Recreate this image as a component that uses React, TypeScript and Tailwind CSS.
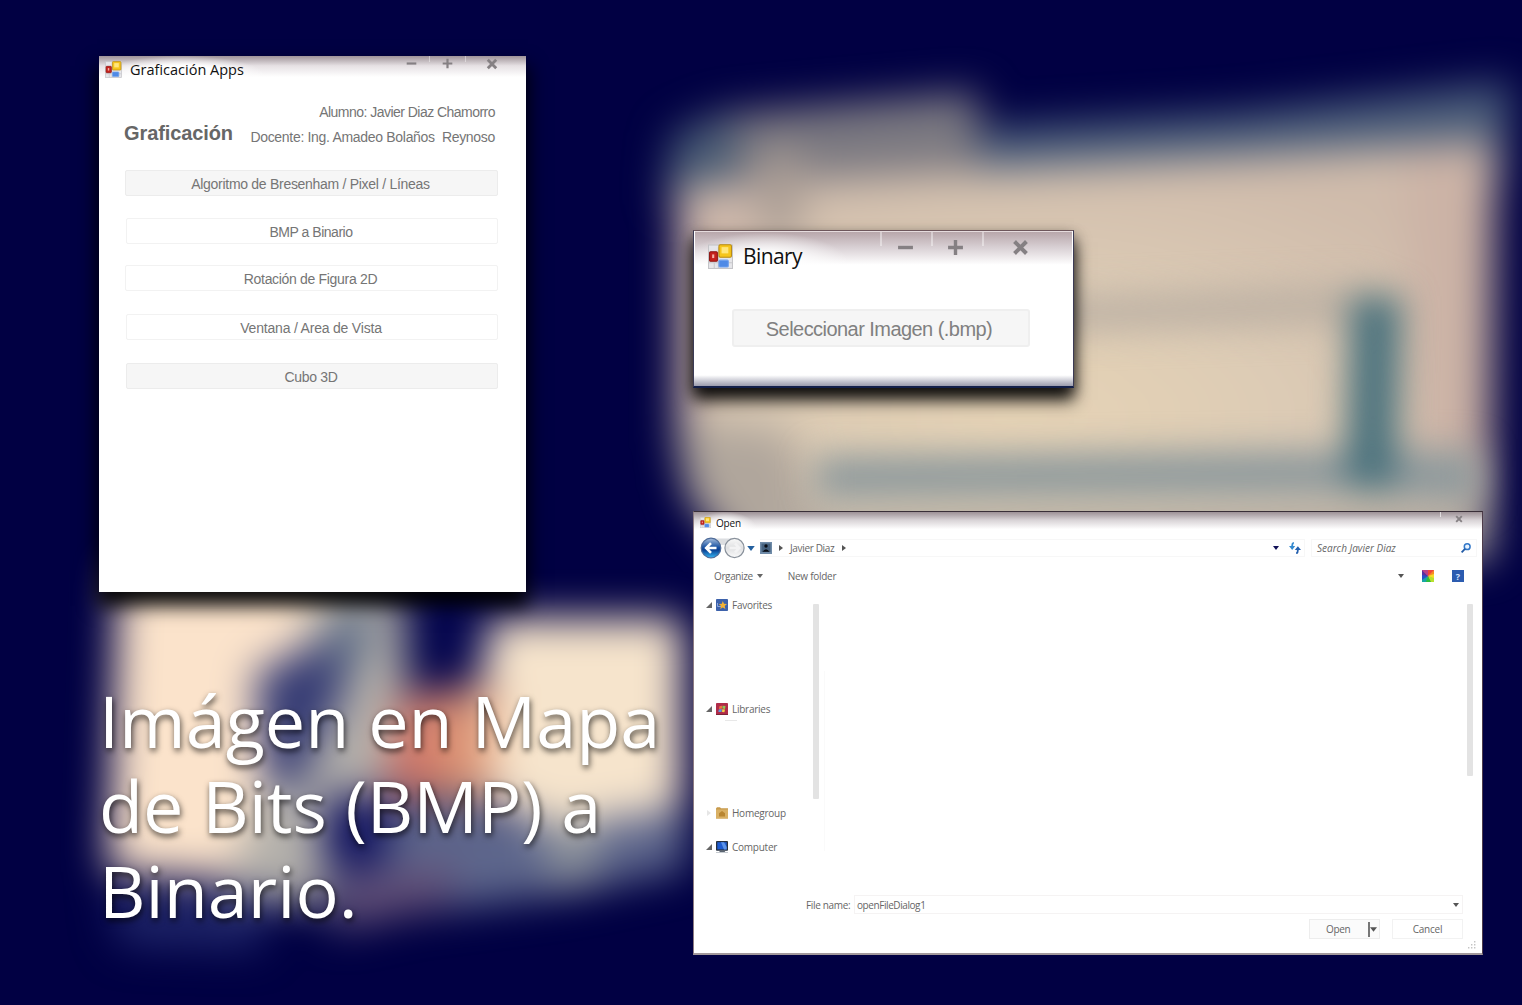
import React from "react";

const ui = "font-['Open_Sans','Noto_Sans',sans-serif]";
const form = "font-['Liberation_Sans',sans-serif]";

function Backdrop() {
  return (
    <svg className="absolute inset-0" width="1522" height="1005" viewBox="0 0 1522 1005" aria-hidden="true">
      <defs>
        <filter id="soft" x="-20%" y="-20%" width="140%" height="140%" colorInterpolationFilters="sRGB"><feGaussianBlur stdDeviation="20" /></filter>
        <filter id="mid" x="-50%" y="-50%" width="200%" height="200%" colorInterpolationFilters="sRGB"><feGaussianBlur stdDeviation="17" /></filter>
        <radialGradient id="sand" cx="0.42" cy="0.66" r="0.65">
          <stop offset="0" stopColor="#e7d4b6" />
          <stop offset="0.5" stopColor="#dccbb5" />
          <stop offset="1" stopColor="#cfbbab" />
        </radialGradient>
        <linearGradient id="red" x1="0" x2="1">
          <stop offset="0" stopColor="#c5605f" />
          <stop offset="0.5" stopColor="#d78a70" />
          <stop offset="1" stopColor="#e2a884" />
        </linearGradient>
      </defs>
      <rect width="1522" height="1005" fill="#010043" />
      <g filter="url(#soft)">
        <path d="M672 134 L720 114 L978 92 L980 195 L668 205Z" fill="#7b7981" />
        <path d="M672 134 L735 114 L735 200 L665 200Z" fill="#475a74" />
        <path d="M980 128 L1240 112 L1512 82 L1500 190 L980 200Z" fill="#4a5d7a" />
        <path d="M677 186 L800 180 L1240 156 L1495 140 L1490 500 L1487 560 L740 560 L690 500 L677 440Z" fill="url(#sand)" />
        <path d="M677 188 L750 182 L750 330 L677 450Z" fill="#cdb7aa" />
        <path d="M760 150 L800 150 L800 240 L760 240Z" fill="#a99c94" />
        <path d="M1405 150 L1490 144 L1490 470 L1420 470Z" fill="#ccb3a6" />
        <path d="M680 420 L790 430 L830 560 L740 560 L684 485Z" fill="#b0a69c" />
        <path d="M740 518 L1490 510 L1490 560 L740 560Z" fill="#b2a99f" />
      </g>
      <g filter="url(#mid)">
        <path d="M1040 298 L1370 284 L1370 322 L1040 332Z" fill="#bdb1a4" />
        <path d="M815 456 L1350 450 L1480 450 L1480 505 L1350 496 L815 500Z" fill="#8e999c" />
        <path d="M1351 296 L1402 296 L1396 488 L1345 488Z" fill="#4b727d" />
      </g>
      <g filter="url(#soft)">
        <path d="M118 570 L350 570 L320 850 L240 880 L108 872Z" fill="#fbe3cb" />
        <path d="M322 570 L402 585 L412 790 L335 870 L320 905 L225 895 L262 780Z" fill="#b3b0ab" />
        <path d="M322 645 L360 590 L372 640 L330 710Z" fill="#5a6a86" />
        <path d="M255 672 L325 640 L345 690 L290 800 L262 770Z" fill="#353b74" />
        <path d="M408 560 L492 560 L482 695 L410 695Z" fill="#04054e" />
        <path d="M490 618 L682 618 L682 808 L560 830 L465 790Z" fill="#f6e4cc" />
        <path d="M395 698 L500 684 L490 800 L385 795Z" fill="url(#red)" />
        <path d="M345 812 L460 802 L560 826 L685 808 L685 870 L560 895 L400 915 L330 930Z" fill="#5d668c" />
        <path d="M325 795 L395 795 L380 872 L322 866Z" fill="#0f115f" />
        <path d="M335 880 L455 862 L450 905 L340 930Z" fill="#614e76" />
        <path d="M545 828 L600 818 L598 885 L548 885Z" fill="#8a909a" />
        <path d="M108 892 L270 895 L260 950 L120 945Z" fill="#1e2468" />
      </g>
    </svg>
  );
}

function FormIcon({ className }: { className: string }) {
  return (
    <svg className={className} viewBox="0 0 24 24" aria-hidden="true">
      <rect x="0.5" y="1" width="23" height="22.5" fill="#e6e6ea" stroke="#c4c4c8" />
      <path d="M1 18h22M6 18v5M10 3v20" stroke="#c8c8cc" />
      <rect x="1.5" y="7.5" width="7.5" height="9" rx="1" fill="#c5211c" stroke="#8d1512" />
      <rect x="4" y="10" width="2" height="3.5" fill="#f5b3a8" />
      <rect x="10.5" y="0.8" width="12" height="12" rx="1.2" fill="#f6c51c" stroke="#b98a10" />
      <rect x="13" y="3" width="6.5" height="6" fill="#ffe67c" />
      <rect x="10.5" y="15.5" width="9" height="6.5" rx="1" fill="#4f8ae6" stroke="#6fa0ee" />
    </svg>
  );
}

function Minus({ className }: { className: string }) {
  return <svg className={className} viewBox="0 0 16 16"><path d="M1 8H15" stroke="#858083" strokeWidth="3.2" /></svg>;
}
function Plus({ className }: { className: string }) {
  return <svg className={className} viewBox="0 0 16 16"><path d="M1 8H15M8 1V15" stroke="#858083" strokeWidth="3.2" /></svg>;
}
function Cross({ className }: { className: string }) {
  return <svg className={className} viewBox="0 0 16 16"><path d="M2.4 2.4L13.6 13.6M13.6 2.4L2.4 13.6" stroke="#858083" strokeWidth="3.8" /></svg>;
}
function Down({ className }: { className: string }) {
  return <svg className={className} viewBox="0 0 6 4"><path d="M0 0H6L3 4Z" fill="currentColor" /></svg>;
}
function Right({ className }: { className: string }) {
  return <svg className={className} viewBox="0 0 4 6"><path d="M0 0L4 3L0 6Z" fill="currentColor" /></svg>;
}
function Expanded() {
  return <svg className="h-[6px] w-[6px] shrink-0" viewBox="0 0 6 6"><path d="M6 0V6H0Z" fill="#666" /></svg>;
}

function MenuButton({ label, className }: { label: string; className: string }) {
  return (
    <button className={`flex h-[26px] shrink-0 items-center justify-center rounded-[2px] border pr-[2px] pt-px text-[14px] leading-none text-[#757575] ${form} ${className}`}>
      <span className="whitespace-nowrap">{label}</span>
    </button>
  );
}

function MainWindow() {
  return (
    <section className="absolute left-[99px] top-[56px] flex h-[536px] w-[427px] flex-col bg-white shadow-[0_12px_18px_2px_rgba(0,0,0,0.95)]">
      <header className="flex h-[28px] shrink-0 items-start bg-linear-to-b from-[#9f9499] via-[#e6e1e4] via-35% to-white to-75%">
        <div className="flex h-[28px] w-[165px] items-center bg-[radial-gradient(ellipse_at_50%_70%,white_35%,transparent_72%)] pl-[6px]">
          <FormIcon className="-mt-[2px] h-[17px] w-[17px] shrink-0" />
          <h2 className={`ml-[8px] whitespace-nowrap text-[14.5px] text-[#111] ${ui}`}>Graficación Apps</h2>
        </div>
        <div className="ml-auto flex h-[15px] items-center pr-[2px]">
          <span className="flex h-full w-[35px] items-start justify-center"><Minus className="mt-[2px] h-[11px] w-[11px]" /></span>
          <span className="flex h-[6px] w-[36px] items-start justify-center self-start border-l border-white/40"><Plus className="mt-[2px] h-[11px] w-[11px] shrink-0" /></span>
          <span className="flex h-[6px] w-[59px] items-start self-start border-l border-white/40 pl-[20px]"><Cross className="mt-[2px] h-[12px] w-[12px] shrink-0" /></span>
        </div>
      </header>
      <div className="mt-[16px] flex justify-between pl-[25px] pr-[31px]">
        <h1 className={`mt-[20px] text-[20px] font-bold leading-[26px] tracking-[-0.1px] text-[#666] ${form}`}>Graficación</h1>
        <div className={`flex flex-col text-right text-[14px] leading-[25px] text-[#757575] ${form}`}>
          <p className="tracking-[-0.53px]">Alumno: Javier Diaz Chamorro</p>
          <p className="whitespace-pre tracking-[-0.31px]">Docente: Ing. Amadeo Bolaños  Reynoso</p>
        </div>
      </div>
      <nav className="mt-[20px] flex flex-col pl-[26px] pr-[28px]">
        <MenuButton label="Algoritmo de Bresenham / Pixel / Líneas" className="border-[#ececec] bg-[#f6f6f6] tracking-[-0.29px]" />
        <MenuButton label="BMP a Binario" className="ml-px mt-[22px] border-[#f2f2f2] bg-white tracking-[-0.47px]" />
        <MenuButton label="Rotación de Figura 2D" className="mt-[21px] border-[#f2f2f2] bg-white tracking-[-0.32px]" />
        <MenuButton label="Ventana / Area de Vista" className="ml-px mt-[23px] border-[#f2f2f2] bg-white tracking-[-0.2px]" />
        <MenuButton label="Cubo 3D" className="ml-px mt-[23px] border-[#ececec] bg-[#f6f6f6] tracking-[-0.3px]" />
      </nav>
    </section>
  );
}

function BinaryWindow() {
  return (
    <section className="absolute left-[693px] top-[230px] flex h-[158px] w-[381px] flex-col border border-t-[#6e575c] border-x-[#3c3b55] border-b-2 border-b-[#13204a] bg-linear-to-b from-white from-93% to-[#9b9cad] shadow-[0_12px_16px_0px_rgba(0,0,0,0.9),0_5px_12px_rgba(0,0,0,0.4)]">
      <header className="mx-px flex h-[42px] shrink-0 items-start border-t border-[#e6dcde] bg-linear-to-b from-[#b8a7ab] via-[#d6cdd1] via-35% to-white to-80%">
        <div className="flex h-[42px] w-[155px] items-center bg-[radial-gradient(ellipse_at_45%_75%,white_20%,transparent_70%)] pl-[13px] pt-[8px]">
          <FormIcon className="-mt-[2px] h-[25px] w-[25px] shrink-0" />
          <h2 className={`-mt-px ml-[10px] text-[21px] leading-none tracking-[-0.6px] text-[#111] ${ui}`}>Binary</h2>
        </div>
        <div className="ml-auto flex h-[32px]">
          <span className="h-[14px] w-[51px] border-l-2 border-white/40 pl-[15px] pt-[7px]"><Minus className="h-[17px] w-[17px]" /></span>
          <span className="h-[14px] w-[51px] border-l-2 border-white/40 pl-[14px] pt-[7px]"><Plus className="h-[17px] w-[17px]" /></span>
          <span className="h-[14px] w-[90px] border-l-2 border-white/40 pl-[28px] pt-[7px]"><Cross className="h-[17px] w-[17px]" /></span>
        </div>
      </header>
      <button className={`ml-[38px] mt-[36px] flex h-[38px] w-[298px] items-center justify-center rounded-[3px] border-2 border-[#efefef] bg-[#f6f6f6] pr-[4px] pt-[2px] text-[20px] tracking-[-0.55px] text-[#808080] ${form}`}>
        <span className="whitespace-nowrap">Seleccionar Imagen (.bmp)</span>
      </button>
    </section>
  );
}

function NavArrows() {
  return (
    <svg className="h-[22px] w-[46px] shrink-0" viewBox="0 0 46 22" aria-hidden="true">
      <defs>
        <linearGradient id="back" x1="0" y1="0" x2="0" y2="1">
          <stop offset="0" stopColor="#a9bfdc" />
          <stop offset="0.45" stopColor="#1d55a4" />
          <stop offset="0.6" stopColor="#0a3f91" />
          <stop offset="1" stopColor="#35b6f4" />
        </linearGradient>
        <linearGradient id="fwd" x1="0" y1="0" x2="0" y2="1">
          <stop offset="0" stopColor="#fafafa" />
          <stop offset="0.5" stopColor="#dfe0e2" />
          <stop offset="1" stopColor="#fbfbfb" />
        </linearGradient>
      </defs>
      <path d="M11 1.5H35V6Q23 10 11 6Z" fill="#dcdee1" />
      <circle cx="11" cy="11" r="9.8" fill="url(#back)" stroke="#4e6b98" strokeWidth="1.2" />
      <path d="M16.5 11H7M11 6.2L6.2 11L11 15.8" fill="none" stroke="#fff" strokeWidth="2.6" />
      <circle cx="34.5" cy="11" r="9.6" fill="url(#fwd)" stroke="#8a929c" strokeWidth="1.2" />
      <path d="M29.5 11H39M35 6.7L39.3 11L35 15.3" fill="none" stroke="#f3f3f4" strokeWidth="2.6" />
    </svg>
  );
}

function TreeRow({ icon, label, arrow }: { icon: React.ReactNode; label: string; arrow: React.ReactNode }) {
  return (
    <li className="flex h-[14px] items-center pl-[12px]">
      {arrow}
      <span className="ml-[4px] mr-[4px] h-[12px] w-[12px]">{icon}</span>
      <span className="whitespace-nowrap tracking-[-0.25px]">{label}</span>
    </li>
  );
}

const star = (
  <svg viewBox="0 0 12 12"><rect width="12" height="12" rx="0.8" fill="#3d62ab" /><path d="M1.5 4V7.5H5" stroke="#8ba6db" fill="none" /><path d="M6.8 2L8 4.8L11 5L8.7 7L9.4 10L6.8 8.4L4.2 10L5 7L2.8 5L5.8 4.8Z" fill="#f4b335" /></svg>
);
const library = (
  <svg viewBox="0 0 12 12"><rect width="12" height="12" rx="0.8" fill="#b02c49" /><path d="M0 11.5H12" stroke="#7c2438" /><path d="M3.4 3.3L6 2.7V5.6L3 6Z" fill="#ee7441" /><path d="M6.5 2.8L9.5 3L9 6L6.4 5.6Z" fill="#8dc957" /><path d="M2.8 6.6L5.8 6.1L5.5 9L2.4 9Z" fill="#5c9be0" /><path d="M6.3 6.2L9 6.5L8.4 9.3L6 9Z" fill="#f4d34b" /></svg>
);
const homegroup = (
  <svg viewBox="0 0 12 12"><path d="M0 1.5L1 .3H4L5 1.3H12V11.5H0Z" fill="#c79a4c" /><rect y="2.5" width="12" height="9" fill="#d9b064" /><path d="M6 4L9 6.3V9.5H3V6.3Z" fill="#b98631" /></svg>
);
const computer = (
  <svg viewBox="0 0 12 12"><rect width="12" height="9.8" rx="0.8" fill="#27313f" /><rect x="1.3" y="1.2" width="9.4" height="7.2" fill="#1d5bd0" /><path d="M5 1.2H8L10.7 6V8.4H8Z" fill="#5c94ea" /><path d="M3 11.4H9.5L8.4 9.5H4Z" fill="#5c6672" /><path d="M0 11.5H12" stroke="#c4c9cf" /></svg>
);

function Spectrum() {
  return (
    <svg className="h-[12px] w-[12px] shrink-0" viewBox="0 0 12 12">
      <path d="M0 0H12V12H0Z" fill="#e23a6a" />
      <path d="M6 6L0 0V6Z" fill="#5a2f9f" /><path d="M6 6L0 0H6Z" fill="#b8408a" />
      <path d="M6 6L6 0H12Z" fill="#f0443a" /><path d="M6 6L12 0V5Z" fill="#f88a22" />
      <path d="M6 6L12 4V9Z" fill="#f7dc29" /><path d="M6 6L12 8V12H8Z" fill="#b9e02d" />
      <path d="M6 6L9 12H3Z" fill="#2fbf3a" /><path d="M6 6L4 12H0V9Z" fill="#18a6a3" /><path d="M6 6L0 10V5Z" fill="#2850c8" />
    </svg>
  );
}

function OpenDialog() {
  return (
    <section className={`absolute left-[693px] top-[511px] flex h-[444px] w-[790px] flex-col border border-b-2 border-t-[#392f38] border-l-[#8d7c82] border-r-[#4e3c4a] border-b-[#a3999c] bg-white text-[10px] leading-[14px] text-[#666] ${ui}`}>
      <header className="flex h-[23px] shrink-0 items-start bg-linear-to-b from-[#9d9196] via-[#d8d3d6] via-35% to-white to-75%">
        <div className="flex h-[23px] w-[62px] items-center bg-[radial-gradient(ellipse_at_50%_70%,white_30%,transparent_72%)] pl-[6px]">
          <FormIcon className="-mt-[2px] h-[11px] w-[11px] shrink-0" />
          <h2 className="-mt-[2px] ml-[5px] text-[10px] tracking-[-0.2px] text-[#111]">Open</h2>
        </div>
        <span className="ml-auto h-[5px] w-[42px] border-l border-white/60 pl-[14px] pt-[3px]"><Cross className="h-[8px] w-[8px]" /></span>
      </header>
      <div className="flex h-[26px] shrink-0 items-center pl-[6px]">
        <NavArrows />
        <Down className="ml-[1px] h-[5px] w-[8px] shrink-0 text-[#24609f]" />
        <div className="ml-[5px] flex h-[18px] w-[545px] items-center border border-l-0 border-[#f7f7f7]">
          <svg className="h-[12px] w-[12px] shrink-0" viewBox="0 0 12 12"><rect width="12" height="12" fill="#6f8ba8" /><rect x="1.5" y="1.5" width="9" height="8.5" fill="#46627f" /><circle cx="6" cy="4" r="1.7" fill="#080d15" /><path d="M2.5 9.8Q6 4.5 9.5 9.8Z" fill="#080d15" /></svg>
          <Right className="ml-[7px] h-[6px] w-[4px] text-[#555]" />
          <span className="ml-[7px] tracking-[-0.34px]">Javier Diaz</span>
          <Right className="ml-[8px] h-[6px] w-[4px] text-[#555]" />
          <Down className="ml-auto mr-[10px] h-[4px] w-[6px] text-[#111158]" />
          <svg className="mr-[3px] h-[12px] w-[12px]" viewBox="0 0 12 12"><path d="M4.8 0.8Q3.2 1 3.2 3.5V6" fill="none" stroke="#3389cf" strokeWidth="1.8" /><path d="M0 4H6.2L3.2 8Z" fill="#3389cf" /><path d="M7.2 11.4Q8.8 11 8.8 8.5V6.5" fill="none" stroke="#235fae" strokeWidth="1.8" /><path d="M5.8 8H12L8.9 4.2Z" fill="#235fae" /></svg>
        </div>
        <div className="ml-[6px] flex h-[18px] w-[166px] items-center border border-[#f7f7f7] pl-[5px] pr-[5px]">
          <span className="italic">Search Javier Diaz</span>
          <svg className="ml-auto h-[10px] w-[10px]" viewBox="0 0 10 10"><circle cx="6.2" cy="3.7" r="2.9" fill="#eaf4ff" stroke="#3277c8" strokeWidth="1.5" /><path d="M4 5.9L0.6 9.4" stroke="#225ba6" strokeWidth="1.8" /></svg>
        </div>
      </div>
      <div className="flex h-[30px] shrink-0 items-center pl-[20px] pr-[18px]">
        <span className="tracking-[-0.38px]">Organize</span>
        <Down className="ml-[4px] h-[4px] w-[6px] text-[#666]" />
        <span className="ml-[25px] tracking-[-0.28px]">New folder</span>
        <Down className="ml-auto mr-[18px] h-[4px] w-[6px] text-[#555]" />
        <Spectrum />
        <span className="ml-[18px] flex h-[12px] w-[12px] items-center justify-center bg-[#2c5cb0] text-[9px] font-bold leading-none text-[#d4e2fa]">?</span>
      </div>
      <div className="flex h-[300px] shrink-0">
        <ul className="flex w-[119px] flex-col pt-[7px]">
          <TreeRow arrow={<Expanded />} icon={star} label="Favorites" />
          <li className="h-[90px]" />
          <TreeRow arrow={<Expanded />} icon={library} label="Libraries" />
          <li className="flex h-[90px] items-start pl-[31px] pt-[4px]"><i className="h-px w-[12px] bg-[#e8e8e8]" /></li>
          <TreeRow arrow={<Right className="h-[6px] w-[6px] shrink-0 text-[#e6e6e6]" />} icon={homegroup} label="Homegroup" />
          <li className="h-[20px]" />
          <TreeRow arrow={<Expanded />} icon={computer} label="Computer" />
        </ul>
        <div className="mt-[13px] h-[195px] w-[6px] rounded-[1px] bg-[#e3e3e3]" />
        <div className="ml-[5px] mt-[80px] h-[180px] w-px bg-[#fafafa]" />
        <div className="ml-auto mr-[9px] mt-[13px] h-[172px] w-[6px] rounded-[1px] bg-[#e3e3e3]" />
      </div>
      <div className="mt-[4px] flex h-[19px] shrink-0 items-center pl-[112px] pr-[19px]">
        <label className="w-[48px] whitespace-nowrap tracking-[-0.33px]">File name:</label>
        <div className="flex h-[19px] flex-1 items-center border border-[#f5f3f3] pl-[2px] pr-[3px]">
          <span className="tracking-[-0.42px]">openFileDialog1</span>
          <Down className="ml-auto h-[4px] w-[6px] text-[#555]" />
        </div>
      </div>
      <div className="mt-[5px] flex h-[20px] shrink-0 justify-end pr-[19px]">
        <button className="flex w-[71px] items-center border border-[#ededed] bg-[#fbfbfb] pl-[16px]">
          <span className="w-[42px] text-left tracking-[-0.3px]">Open</span>
          <i className="h-[15px] w-[2px] shrink-0 bg-[#777]" />
          <Down className="h-[5px] w-[7px] shrink-0 text-[#555]" />
        </button>
        <button className="ml-[12px] w-[71px] border border-[#f2f2f2] bg-white tracking-[-0.2px]">Cancel</button>
      </div>
      <svg className="ml-auto mr-[6px] mt-[2px] h-[8px] w-[8px] shrink-0" viewBox="0 0 8 8"><path d="M6 0h1.4v1.4H6zM3 3h1.4v1.4H3zM6 3h1.4v1.4H6zM0 6h1.4v1.4H0zM3 6h1.4v1.4H3zM6 6h1.4v1.4H6z" fill="#c4c4c4" /></svg>
    </section>
  );
}

export default function App() {
  return (
    <main className="relative h-[1005px] w-[1522px] overflow-hidden bg-[#010043]">
      <Backdrop />
      <MainWindow />
      <BinaryWindow />
      <OpenDialog />
      <p className={`absolute left-[99px] top-[678px] whitespace-nowrap text-[72px] leading-[85px] text-white [text-shadow:1px_3px_6px_rgba(0,0,0,0.7)] ${ui}`}>
        Imágen en Mapa<br />de Bits (BMP) a<br />Binario.
      </p>
    </main>
  );
}
